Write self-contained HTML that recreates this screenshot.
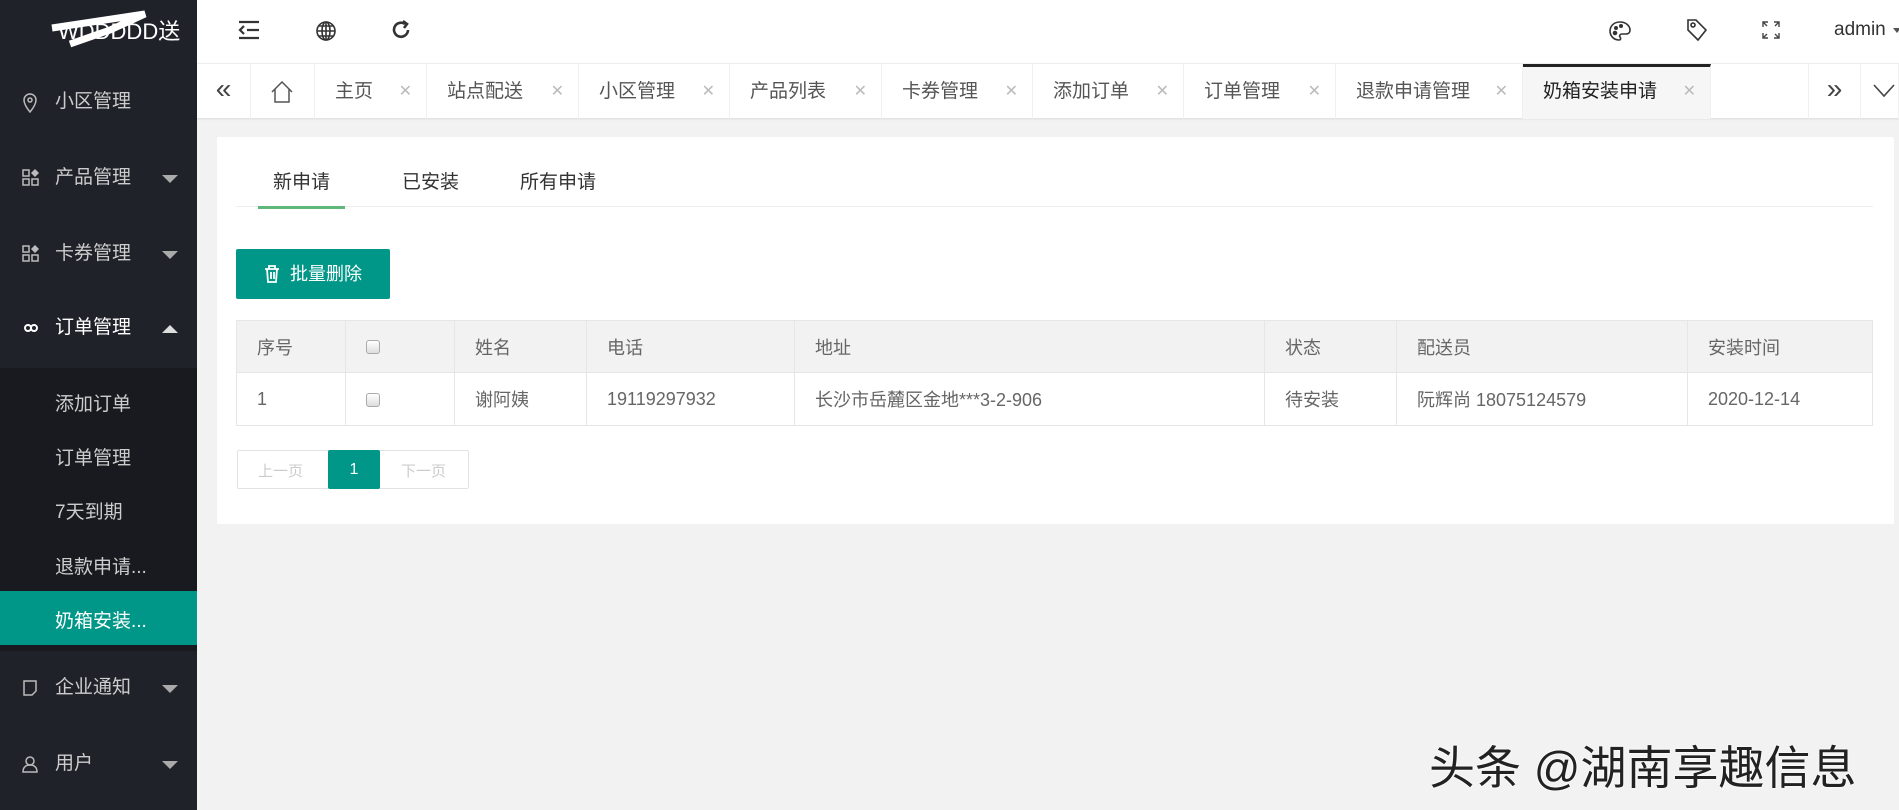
<!DOCTYPE html>
<html><head><meta charset="utf-8"><style>
*{margin:0;padding:0;box-sizing:border-box}
body{width:1899px;height:810px;overflow:hidden;background:#f2f2f2;font-family:"Liberation Sans","Noto Sans CJK SC",sans-serif;position:relative;color:#333}
.abs{position:absolute}
#side{left:0;top:0;width:197px;height:810px;background:#20222a}
.mi{position:absolute;left:0;width:197px;color:#ccc;font-size:19px;line-height:24px}
.mi .t{position:absolute;left:55px}
.mi .ic{position:absolute;left:22px;top:3px}
.arr{position:absolute;left:162px;top:9px;width:0;height:0;border-left:8px solid transparent;border-right:8px solid transparent;border-top:8px solid #aaa}
.arr.up{border-top:none;border-bottom:8px solid #ddd}
#sub{left:0;top:368px;width:197px;height:283px;background:#191a20}
.si{position:absolute;left:55px;color:#ccc;font-size:19px}
#hdr{left:197px;top:0;width:1702px;height:63px;background:#fff}
#tabs{left:197px;top:63px;width:1702px;height:55px;background:#fff;border-top:1px solid #eee;box-shadow:0 1px 2px rgba(0,0,0,.1)}
.tb{position:absolute;top:0;height:55px;border-right:1px solid #f0f0f0;font-size:19px;color:#555;line-height:55px}
.tb .x{position:absolute;right:14px;color:#bbb;font-size:16px}
#card{left:217px;top:137px;width:1677px;height:387px;background:#fff;border-radius:2px}
table{border-collapse:collapse;position:absolute;left:236px;top:320px;width:1637px;font-size:18px;color:#666}
td{border:1px solid #e6e6e6;padding-left:20px;height:53px}
tr.h td{background:#f2f2f2;height:52px}
.cb{display:inline-block;width:14px;height:14px;border:1px solid #aaa;border-radius:3px;background:linear-gradient(#fff,#ddd);vertical-align:middle}
</style></head><body>
<div id="side" class="abs">
 <div class="abs" style="left:58px;top:14px;color:#fff;font-size:22px;">WDDDDD送</div>
 <svg class="abs" style="left:50px;top:8px" width="100" height="40"><path d="M2 20 L95 6 L60 22 L20 36" stroke="#fff" stroke-width="7" fill="none"/></svg>
 <div class="mi" style="top:90px"><svg class="ic" width="16" height="20" viewBox="0 0 16 20"><path d="M8 19C3 13 2 10 2 7a6 6 0 0 1 12 0c0 3-1 6-6 12z" fill="none" stroke="#bbb" stroke-width="1.5"/><circle cx="8" cy="7" r="2" fill="none" stroke="#bbb" stroke-width="1.5"/></svg><span class="t">小区管理</span></div>
 <div class="mi" style="top:166px"><svg class="ic" width="18" height="18"><rect x="1" y="1" width="6" height="6" fill="none" stroke="#bbb" stroke-width="1.5"/><rect x="1" y="10" width="6" height="6" fill="none" stroke="#bbb" stroke-width="1.5"/><rect x="10" y="10" width="6" height="6" fill="none" stroke="#bbb" stroke-width="1.5"/><path d="M13 0l4 4-4 4-4-4z" fill="#bbb"/></svg><span class="t">产品管理</span><i class="arr"></i></div>
 <div class="mi" style="top:242px"><svg class="ic" width="18" height="18"><rect x="1" y="1" width="6" height="6" fill="none" stroke="#bbb" stroke-width="1.5"/><rect x="1" y="10" width="6" height="6" fill="none" stroke="#bbb" stroke-width="1.5"/><rect x="10" y="10" width="6" height="6" fill="none" stroke="#bbb" stroke-width="1.5"/><path d="M13 0l4 4-4 4-4-4z" fill="#bbb"/></svg><span class="t">卡券管理</span><i class="arr"></i></div>
 <div class="mi" style="top:316px;color:#fff"><svg class="ic" width="18" height="18"><path d="M3 9a3 3 0 1 0 6 0a3 3 0 1 0 6 0a3 3 0 1 0-6 0a3 3 0 1 0-6 0" fill="none" stroke="#fff" stroke-width="2"/></svg><span class="t">订单管理</span><i class="arr up"></i></div>
 <div id="sub" class="abs"></div>
 <div class="si" style="top:389px">添加订单</div>
 <div class="si" style="top:443px">订单管理</div>
 <div class="si" style="top:497px">7天到期</div>
 <div class="si" style="top:552px">退款申请...</div>
 <div class="abs" style="left:0;top:591px;width:197px;height:54px;background:#009688"></div>
 <div class="si" style="top:606px;color:#fff">奶箱安装...</div>
 <div class="mi" style="top:676px"><svg class="ic" width="16" height="18"><path d="M2 2h12v10l-4 4H2z" fill="none" stroke="#bbb" stroke-width="1.5"/></svg><span class="t">企业通知</span><i class="arr"></i></div>
 <div class="mi" style="top:752px"><svg class="ic" width="20" height="18"><circle cx="8" cy="6" r="4" fill="none" stroke="#bbb" stroke-width="1.5"/><path d="M1 17c0-5 3-7 7-7s7 2 7 7z" fill="none" stroke="#bbb" stroke-width="1.5"/></svg><span class="t">用户</span><i class="arr"></i></div>
</div>
<div id="hdr" class="abs">
 <svg class="abs" style="left:41px;top:20px" width="22" height="20"><path d="M1 2h20M9 10h12M1 18h20M6 6l-4 4 4 4" stroke="#333" stroke-width="2.2" fill="none"/></svg>
 <svg class="abs" style="left:118px;top:20px" width="22" height="22" viewBox="0 0 22 22" fill="none" stroke="#333" stroke-width="1.6"><circle cx="11" cy="11" r="9"/><ellipse cx="11" cy="11" rx="4" ry="9"/><path d="M2 11h18M4 6h14M4 16h14M11 2v18"/></svg>
 <svg class="abs" style="left:193px;top:19px" width="22" height="22" viewBox="0 0 22 22" fill="none" stroke="#333" stroke-width="2.6"><path d="M18 11a7 7 0 1 1-3-6"/><path d="M13 2l4 3-3 4" /></svg>
 <svg class="abs" style="left:1411px;top:20px" width="24" height="22" viewBox="0 0 24 22" fill="none" stroke="#333" stroke-width="1.6"><path d="M12 2C5 2 2 7 2 11c0 5 4 9 9 9 2 0 2-2 1-3s0-3 2-3h4c3 0 4-2 4-4 0-4-4-8-10-8z"/><circle cx="7" cy="13" r="1.5" fill="#333"/><circle cx="8" cy="8" r="1.2" fill="#333"/><circle cx="13" cy="6" r="1.2" fill="#333"/></svg>
 <svg class="abs" style="left:1489px;top:18px" width="22" height="24" viewBox="0 0 22 24" fill="none" stroke="#333" stroke-width="1.6"><path d="M2 2h8l10 10-8 10L2 12z"/><circle cx="7" cy="7" r="2"/></svg>
 <svg class="abs" style="left:1565px;top:21px" width="18" height="18" fill="none" stroke="#444" stroke-width="1.4"><path d="M1 6V1h5M12 1h5v5M17 12v5h-5M6 17H1v-5M1 1l4 4M17 1l-4 4M17 17l-4-4M1 17l4-4"/></svg>
 <div class="abs" style="left:1637px;top:19px;font-size:19px;color:#333">admin</div>
 <div class="abs" style="left:1696px;top:28px;border-left:4px solid transparent;border-right:4px solid transparent;border-top:5px solid #555"></div>
</div>
<div id="tabs" class="abs">
 <div class="tb" style="left:0;width:54px;text-align:center;font-size:28px;color:#444;line-height:50px">«</div>
 <div class="tb" style="left:54px;width:64px"><svg class="abs" style="left:20px;top:17px" width="22" height="22" fill="none" stroke="#555" stroke-width="1.5"><path d="M1 11L11 1l10 10M4 8v13h14V8"/></svg></div>
 <div class="tb" style="left:118px;width:112px;padding-left:20px">主页<span class="x">✕</span></div>
 <div class="tb" style="left:230px;width:152px;padding-left:20px">站点配送<span class="x">✕</span></div>
 <div class="tb" style="left:382px;width:151px;padding-left:20px">小区管理<span class="x">✕</span></div>
 <div class="tb" style="left:533px;width:152px;padding-left:20px">产品列表<span class="x">✕</span></div>
 <div class="tb" style="left:685px;width:151px;padding-left:20px">卡券管理<span class="x">✕</span></div>
 <div class="tb" style="left:836px;width:151px;padding-left:20px">添加订单<span class="x">✕</span></div>
 <div class="tb" style="left:987px;width:152px;padding-left:20px">订单管理<span class="x">✕</span></div>
 <div class="tb" style="left:1139px;width:187px;padding-left:20px">退款申请管理<span class="x">✕</span></div>
 <div class="tb" style="left:1326px;width:188px;padding-left:20px;background:#f6f6f6;color:#222;border-top:3px solid #222;line-height:49px">奶箱安装申请<span class="x">✕</span></div>
 <div class="tb" style="left:1611px;width:53px;border-left:1px solid #f0f0f0;text-align:center;font-size:28px;color:#444;line-height:50px">»</div>
 <div class="tb" style="left:1664px;width:38px"><svg class="abs" style="left:12px;top:20px" width="22" height="14" fill="none" stroke="#444" stroke-width="1.6"><path d="M1 1l10 11L21 1"/></svg></div>
</div>
<div id="card" class="abs"></div>
<div class="abs" style="left:236px;top:206px;width:1637px;height:1px;background:#eee"></div>
<div class="abs" style="left:273px;top:167px;font-size:19px;color:#333">新申请</div>
<div class="abs" style="left:258px;top:206px;width:87px;height:3px;background:#5fb878"></div>
<div class="abs" style="left:402px;top:167px;font-size:19px;color:#333">已安装</div>
<div class="abs" style="left:520px;top:167px;font-size:19px;color:#333">所有申请</div>
<div class="abs" style="left:236px;top:249px;width:154px;height:50px;background:#009688;border-radius:2px;color:#fff;font-size:18px;line-height:50px;padding-left:54px">批量删除</div>
<svg class="abs" style="left:264px;top:265px" width="16" height="18" fill="none" stroke="#fff" stroke-width="1.8"><path d="M1 4h14M5 4V1h6v3M3 4l1 13h8l1-13M7 7v7M10 7v7"/></svg>
<table>
<tr class="h"><td style="width:109px">序号</td><td style="width:109px"><span class="cb"></span></td><td style="width:132px">姓名</td><td style="width:208px">电话</td><td style="width:470px">地址</td><td style="width:132px">状态</td><td style="width:291px">配送员</td><td>安装时间</td></tr>
<tr><td>1</td><td><span class="cb"></span></td><td>谢阿姨</td><td>19119297932</td><td>长沙市岳麓区金地***3-2-906</td><td>待安装</td><td>阮辉尚 18075124579</td><td>2020-12-14</td></tr>
</table>
<div class="abs" style="left:237px;top:450px;width:232px;height:39px;border:1px solid #e2e2e2;border-radius:2px"></div>
<div class="abs" style="left:258px;top:460px;font-size:15px;color:#ccc">上一页</div>
<div class="abs" style="left:328px;top:450px;width:52px;height:39px;background:#009688;color:#fff;font-size:16px;line-height:39px;text-align:center;border-radius:2px">1</div>
<div class="abs" style="left:401px;top:460px;font-size:15px;color:#ccc">下一页</div>
<div class="abs" style="left:1429px;top:732px;font-size:46px;color:#222;-webkit-text-stroke:0;text-shadow:0 0 2px #fff,0 0 2px #fff">头条 @湖南享趣信息</div>
</body></html>
